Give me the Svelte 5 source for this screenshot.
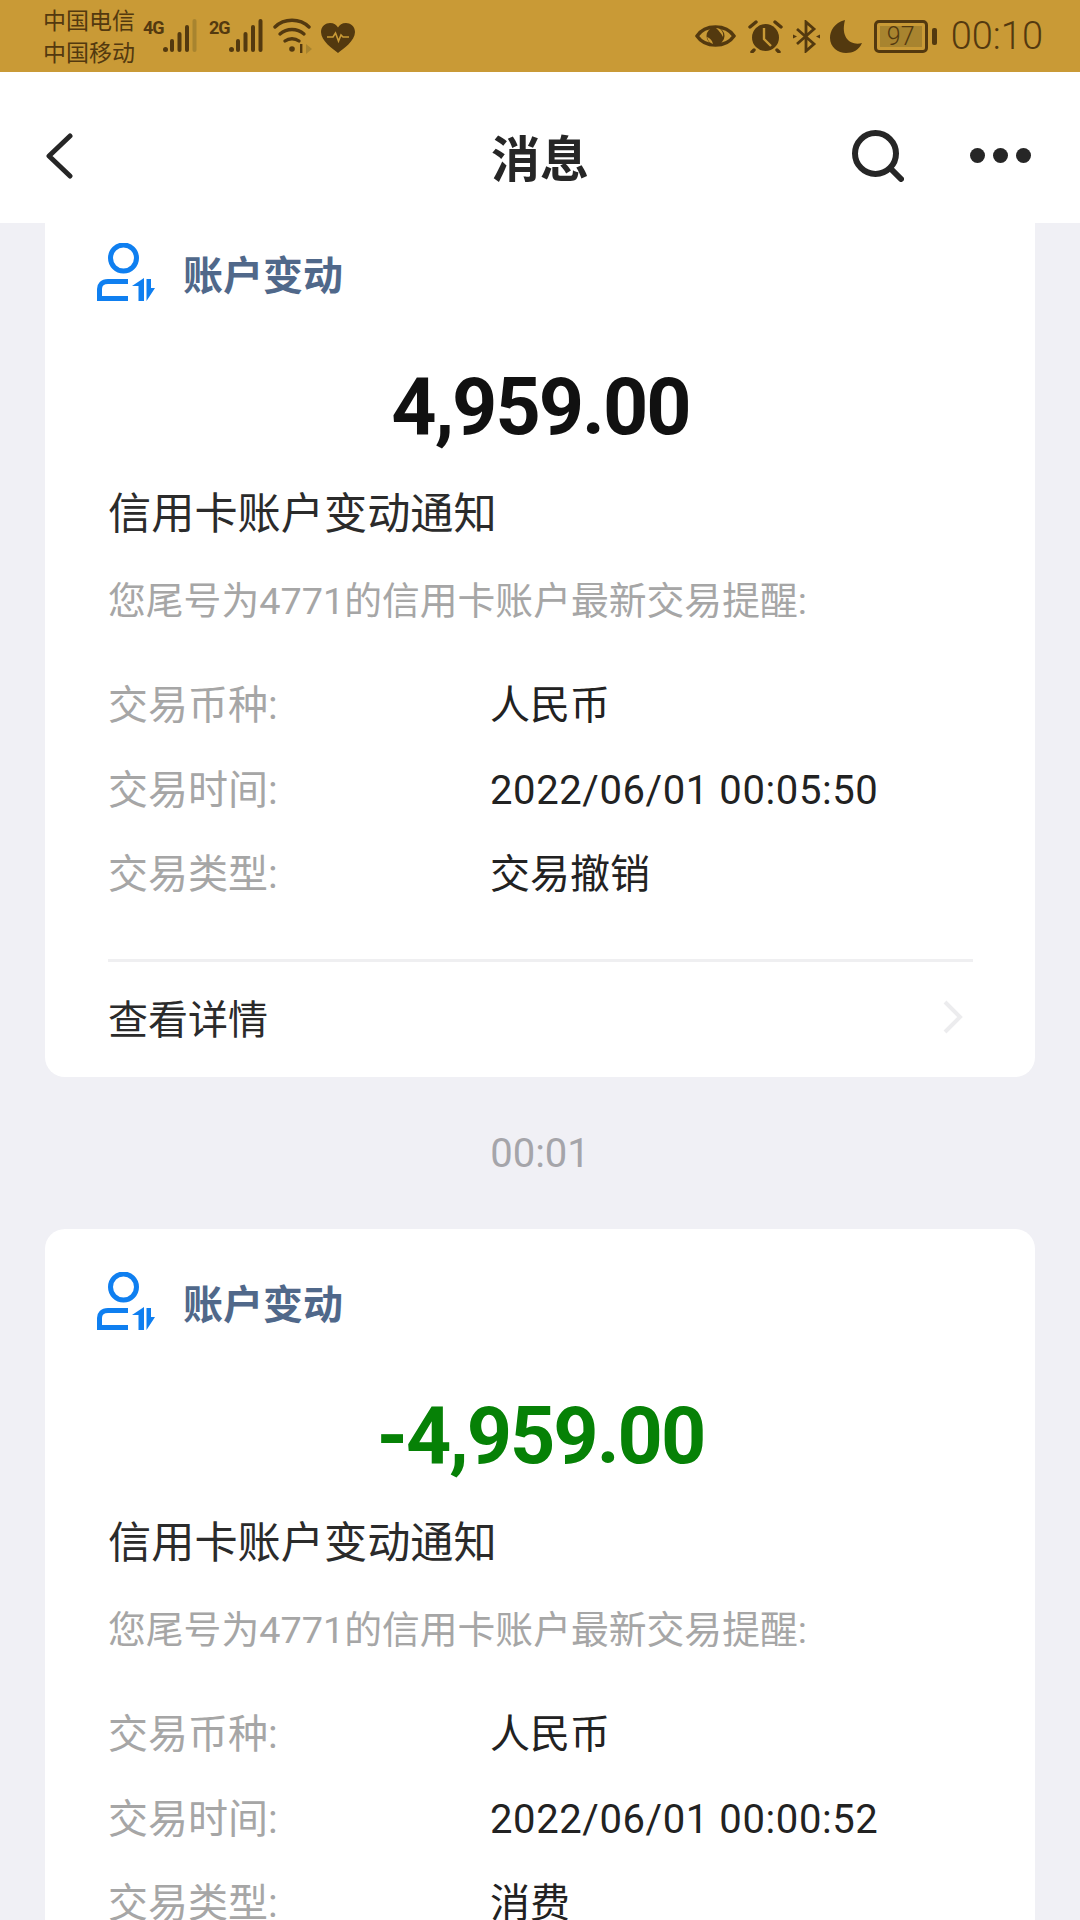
<script>
    const cards = [
        { amount: '4,959.00', negative: false, time: '2022/06/01 00:05:50', type: '交易撤销' },
        { amount: '-4,959.00', negative: true, time: '2022/06/01 00:00:52', type: '消费' }
    ];
</script>

<div class="page">
    <header class="status">
        <div class="carriers">
            <span>中国电信</span>
            <span>中国移动</span>
        </div>
        <div class="net">
            <b>4G</b>
            <svg width="34" height="34" viewBox="0 0 34 34">
                <g fill="#53390f">
                    <circle cx="2.500" cy="30.500" r="2.500" />
                    <rect x="7" y="20" width="4" height="13" rx="2" />
                    <rect x="14.500" y="13" width="4" height="20" rx="2" />
                    <rect x="22" y="6" width="4" height="27" rx="2" />
                </g>
                <rect x="29.500" y="0" width="4" height="33" rx="2" fill="#a8842f" />
            </svg>
        </div>
        <div class="net">
            <b>2G</b>
            <svg width="34" height="34" viewBox="0 0 34 34" fill="#53390f">
                <circle cx="2.500" cy="30.500" r="2.500" />
                <rect x="7" y="20" width="4" height="13" rx="2" />
                <rect x="14.500" y="13" width="4" height="20" rx="2" />
                <rect x="22" y="6" width="4" height="27" rx="2" />
                <rect x="29.500" y="0" width="4" height="33" rx="2" />
            </svg>
        </div>
        <svg class="wifi" width="40" height="36" viewBox="0 0 40 36" fill="none" stroke="#53390f" stroke-width="3.400" stroke-linecap="round">
            <path d="M2 9 C11 0 27 0 36 9" />
            <path d="M7 16 C14 10 24 10 31 16" />
            <path d="M12 23 C16 20 22 20 26 23" />
            <circle cx="19" cy="31" r="2.800" fill="#53390f" stroke="none" />
            <rect x="27" y="26" width="2.400" height="9" fill="#53390f" stroke="none" />
            <path d="M33 26 L39 31 L33 36 Z" fill="#a8842f" stroke="none" />
        </svg>
        <svg class="heart" width="34" height="30" viewBox="0 0 34 30">
            <path fill="#53390f" d="M17 30 C12 26 0 18 0 9 C0 3 5 0 9 0 C13 0 15.500 2 17 4.500 C18.500 2 21 0 25 0 C29 0 34 3 34 9 C34 18 22 26 17 30 Z" />
            <path fill="none" stroke="#c99a36" stroke-width="1.600" d="M6 14 H12 L14.500 10 L17.500 18 L20 12 L22 14 H28" />
        </svg>
        <div class="spacer"></div>
        <svg class="eye" width="41" height="28" viewBox="0 0 41 28">
            <path fill="none" stroke="#53390f" stroke-width="3.400" d="M2 14 C10 2 31 2 39 14 C31 26 10 26 2 14 Z" />
            <circle cx="20.500" cy="14" r="9" fill="#53390f" />
            <path fill="#c99a36" d="M21 6 C26 6 29 10 28 15 C26 11 24 9 21 6 Z M12 15 C15 16 17 18 18 22 C15 21 13 19 12 15 Z" />
        </svg>
        <svg class="alarm" width="35" height="33" viewBox="0 0 35 33">
            <circle cx="17.500" cy="17.500" r="13.500" fill="#53390f" />
            <path fill="none" stroke="#c99a36" stroke-width="2.400" d="M16 8 V19 L23 26" />
            <path fill="none" stroke="#53390f" stroke-width="3.400" stroke-linecap="round" d="M2 7 L8 2 M27 2 L33 7 M6 30 L4 32 M29 30 L31 32" />
        </svg>
        <svg class="bt" width="27" height="33" viewBox="0 0 27 33">
            <path fill="none" stroke="#53390f" stroke-width="2.800" d="M4 9 L21 24 L13 31 V2 L21 9 L4 24" />
            <path fill="#53390f" d="M0 14.500 L4 16.500 L0 18.500 Z M27 14.500 L23 16.500 L27 18.500 Z" />
        </svg>
        <svg class="moon" width="32" height="33" viewBox="0 0 32 33">
            <path fill="#53390f" d="M15 0 C4 3 0 11 0 18 C0 27 8 33 16 33 C23 33 29 30 32 23 C22 26 10 19 15 0 Z" />
        </svg>
        <div class="battery">
            <div class="shell">
                <div class="level"></div>
                <span>97</span>
            </div>
            <div class="nub"></div>
        </div>
        <div class="clock">00:10</div>
    </header>

    <nav class="topbar">
        <svg class="back" width="28" height="46" viewBox="0 0 28 46" fill="none" stroke="#262626" stroke-width="5" stroke-linecap="round" stroke-linejoin="round">
            <path d="M24 3 L3 23 L24 43" />
        </svg>
        <h1>消息</h1>
        <div class="actions">
            <svg width="52" height="52" viewBox="0 0 52 52" fill="none" stroke="#262626" stroke-width="6" stroke-linecap="round">
                <circle cx="23.500" cy="23.500" r="20.500" />
                <path d="M39 39 L49 49" />
            </svg>
            <div class="dots">
                <i></i><i></i><i></i>
            </div>
        </div>
    </nav>

    <main class="list">
        {#each cards as card, i}
            {#if i > 0}
                <div class="stamp">00:01</div>
            {/if}
            <section class="card">
                <div class="kind">
                    <svg width="58" height="58" viewBox="0 0 58 58" fill="none">
                        <circle cx="26.500" cy="15" r="13" stroke="#0f7ff0" stroke-width="5" />
                        <path stroke="#0f7ff0" stroke-width="5" d="M31 38.500 H11 C5 38.500 2.500 42 2.500 46 V55.500 H31" />
                        <path fill="#0f7ff0" d="M35 43 L47 35 V58 H41.500 V43 Z M49.500 36 H54 V45 H58 L49.500 58 Z" />
                    </svg>
                    <span>账户变动</span>
                </div>
                <div class="amount" class:negative={card.negative}>{card.amount}</div>
                <h2>信用卡账户变动通知</h2>
                <p class="hint">您尾号为4771的信用卡账户最新交易提醒:</p>
                <dl>
                    <dt>交易币种:</dt>
                    <dd>人民币</dd>
                    <dt>交易时间:</dt>
                    <dd class="time">{card.time}</dd>
                    <dt>交易类型:</dt>
                    <dd>{card.type}</dd>
                </dl>
                <div class="more">
                    <span>查看详情</span>
                    <svg width="22" height="34" viewBox="0 0 22 34" fill="none" stroke="#ececee" stroke-width="4">
                        <path d="M3 2 L18 17 L3 32" />
                    </svg>
                </div>
            </section>
        {/each}
    </main>
</div>

<style>
    :global(body) {
        margin: 0;
        background: #f0f0f5;
    }

    .page {
        height: 1920px;
        width: 1080px;

        display: flex;
        flex-direction: column;

        overflow: hidden;

        font-family: "Roboto", "Noto Sans CJK SC", sans-serif;
        background-color: #f0f0f5;
    }

    .status {
        height: 72px;
        flex-shrink: 0;

        padding: 2px 37px 0 43px;
        box-sizing: border-box;

        display: flex;
        align-items: center;
        gap: 8px;

        color: #53390f;
        background-color: #c99a36;
    }

    .carriers {
        display: flex;
        flex-direction: column;
        gap: 1px;

        font-size: 23px;
        line-height: 31px;
    }

    .net {
        display: flex;
        align-items: flex-start;
        margin-top: -2px;
    }

    .net b {
        width: 20px;

        font-size: 18px;
        line-height: 18px;
        letter-spacing: -1px;
    }

    .net + .net {
        margin-left: 4px;
    }

    .wifi {
        margin: -2px 0 0 2px;
    }

    .heart {
        margin-top: 1px;
    }

    .spacer {
        flex: 1;
    }

    .eye,
    .alarm,
    .bt,
    .moon,
    .battery,
    .clock {
        margin-top: -2px;
    }

    .alarm {
        margin-left: 4px;
    }

    .bt {
        margin-left: 2px;
    }

    .moon {
        margin-left: 2px;
    }

    .battery {
        margin-left: 4px;

        display: flex;
        align-items: center;
        gap: 4px;
    }

    .shell {
        height: 27px;
        width: 48px;

        position: relative;

        display: flex;
        justify-content: center;
        align-items: center;

        border: 3px solid #53390f;
        border-radius: 5px;

        font-size: 25px;
        font-weight: 300;
    }

    .level {
        position: absolute;
        inset: 3px;

        background-color: #a8842f;
    }

    .shell span {
        position: relative;
    }

    .nub {
        height: 17px;
        width: 5px;

        border-radius: 2px;
        background-color: #53390f;
    }

    .clock {
        margin-left: 6px;

        font-size: 38px;
        font-weight: 300;
    }

    .topbar {
        height: 151px;
        flex-shrink: 0;

        padding: 16px 49px 0 46px;
        box-sizing: border-box;

        position: relative;
        z-index: 1;

        display: grid;
        grid-template-columns: 1fr auto 1fr;
        align-items: center;

        background-color: #ffffff;
    }

    .topbar h1 {
        margin: 0 0 0 3px;

        font-size: 49px;
        font-weight: 700;
        color: #262626;
    }

    .actions {
        display: flex;
        justify-content: flex-end;
        align-items: center;
        gap: 66px;
    }

    .dots {
        display: flex;
        gap: 8px;
    }

    .dots i {
        height: 15px;
        width: 15px;

        border-radius: 50%;
        background-color: #262626;
    }

    .list {
        padding: 0 45px;
        margin-top: -23px;
    }

    .card {
        padding: 43px 62px 0 63px;

        border-radius: 20px;
        background-color: #ffffff;
    }

    .stamp {
        height: 152px;

        display: flex;
        justify-content: center;
        align-items: center;

        font-size: 40px;
        color: #a5a5aa;
    }

    .kind {
        height: 58px;
        margin-left: -11px;

        display: flex;
        align-items: flex-start;
        gap: 28px;
    }

    .kind span {
        margin-top: 9px;

        font-size: 40px;
        line-height: 50px;
        font-weight: 700;
        color: #50688a;
    }

    .amount {
        margin-top: 56px;

        text-align: center;
        font-size: 79px;
        line-height: 100px;
        font-weight: 700;
        letter-spacing: -2px;
        color: #111111;
    }

    .amount.negative {
        color: #068106;
    }

    h2 {
        margin: 33px 0 0;

        font-size: 43.200px;
        line-height: 50px;
        font-weight: 400;
        color: #2b2b2b;
    }

    .hint {
        margin: 36px 0 0;

        font-size: 37.800px;
        line-height: 50px;
        color: #a6a6a6;
    }

    dl {
        margin: 55px 0 0;

        display: grid;
        grid-template-columns: 382px 1fr;
        row-gap: 34.500px;

        font-size: 40px;
        line-height: 50px;
    }

    dt {
        color: #a6a6a6;
    }

    dd {
        margin: 0;
        color: #222222;
    }

    dd.time {
        letter-spacing: 0.600px;
    }

    .more {
        height: 118px;
        margin-top: 59px;
        padding: 0 9px 6px 0;
        box-sizing: border-box;

        display: flex;
        justify-content: space-between;
        align-items: center;

        border-top: 3px solid #efeff1;

        font-size: 40px;
        color: #2b2b2b;
    }
</style>
